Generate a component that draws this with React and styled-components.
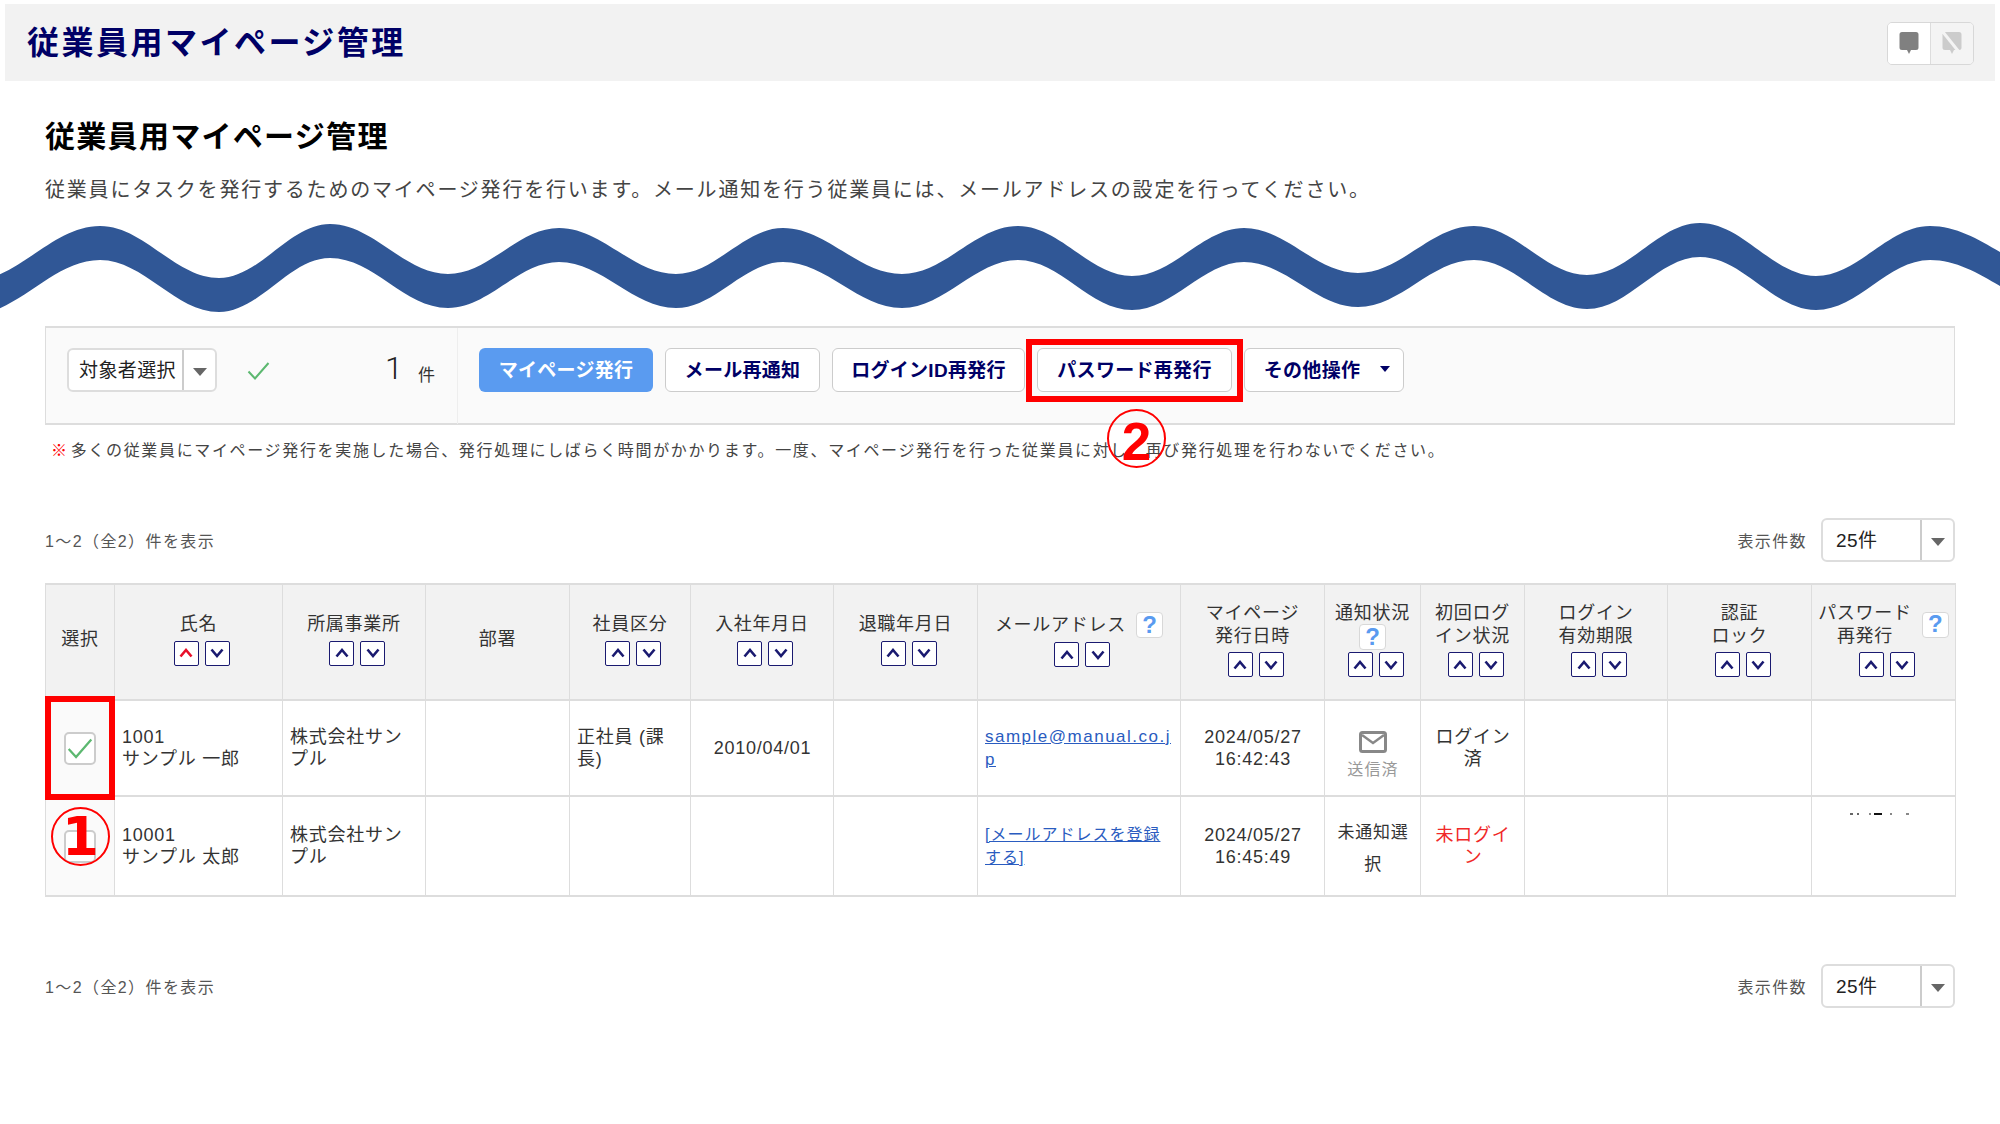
import React from "react";
import styled, { createGlobalStyle } from "styled-components";

const GlobalStyle = createGlobalStyle`
    html, body {
        margin: 0;
        padding: 0;
        background: #fff;
    }
    body {
        font-family: "Liberation Sans", "Noto Sans CJK JP", sans-serif;
        color: #333;
        width: 2000px;
        height: 1124px;
        overflow: hidden;
    }
`;

const Header = styled.header`
    display: flex;
    align-items: center;
    justify-content: space-between;
    height: 77px;
    margin: 4px 5px 0;
    padding: 0 21px 0 22px;
    background: #f2f2f2;
`;

const HeaderTitle = styled.h1`
    margin: 0;
    font-size: 32px;
    letter-spacing: 2.5px;
    line-height: 40px;
    font-weight: 700;
    color: #000066;
`;

const HeaderButtons = styled.div`
    display: flex;
    width: 87px;
    height: 43px;
    border: 1px solid #d8d8d8;
    border-radius: 5px;
    overflow: hidden;
    box-sizing: border-box;
    margin-top: 1px;
`;

const HeaderButton = styled.div`
    flex: 1;
    display: flex;
    align-items: center;
    justify-content: center;
    background: ${(p) => (p.$off ? "#f4f4f4" : "#fff")};
    & + & {
        border-left: 1px solid #ddd;
    }
`;

const Main = styled.main`
    padding: 0 45px;
`;

const Heading = styled.h2`
    margin: 36px 0 0;
    font-size: 30px;
    letter-spacing: 1.3px;
    line-height: 40px;
    font-weight: 700;
    color: #000;
`;

const Description = styled.p`
    margin: 18px 0 0;
    font-size: 20px;
    letter-spacing: 1.8px;
    line-height: 30px;
    color: #444;
`;

const WaveHolder = styled.div`
    margin: 15px -45px 0;
    height: 96px;
    & svg {
        display: block;
    }
`;

const Toolbar = styled.div`
    display: flex;
    height: 99px;
    margin-top: 10px;
    box-sizing: border-box;
    border: 2px solid #ddd;
    border-width: 2px 1px 2px 1px;
    background: #fafafa;
`;

const ToolbarLeft = styled.div`
    display: flex;
    width: 412px;
    height: 96px;
    box-sizing: border-box;
    padding: 20px 0 0 21px;
    border-right: 1px solid #eee;
`;

const SelectBox = styled.div`
    display: flex;
    width: ${(p) => p.$w}px;
    height: 44px;
    box-sizing: border-box;
    background: #fff;
    border: 2px solid #ddd;
    border-radius: 6px;
`;

const SelectLabel = styled.div`
    flex: 1;
    display: flex;
    align-items: center;
    padding-left: ${(p) => p.$pad}px;
    padding-bottom: 3px;
    font-size: 19px;
    letter-spacing: 0.4px;
    color: #222;
`;

const SelectArrow = styled.div`
    width: ${(p) => p.$w}px;
    display: flex;
    align-items: center;
    justify-content: center;
    border-left: 2px solid #ccc;
    &::after {
        content: "";
        border-left: 7px solid transparent;
        border-right: 7px solid transparent;
        border-top: 8px solid #666;
        margin-top: 4px;
    }
`;

const CheckMark = styled.div`
    margin: 14px 0 0 30px;
    height: 18px;
`;

const CountNum = styled.div`
    margin: 2px 0 0 115px;
    width: 20px;
    font-size: 32px;
    line-height: 36px;
    font-family: "Roboto", "Liberation Sans", sans-serif;
    font-weight: 300;
    color: #222;
`;

const CountUnit = styled.div`
    margin: 16px 0 0 13px;
    font-size: 17px;
    line-height: 24px;
    color: #333;
`;

const ToolbarActions = styled.div`
    display: flex;
    align-items: flex-start;
    padding: 20px 0 0 21px;
    gap: 12px;
`;

const ActionButton = styled.button`
    position: relative;
    width: ${(p) => p.$w}px;
    height: 44px;
    padding: 0 0 3px ${(p) => p.$shift ?? 0}px;
    box-sizing: border-box;
    border: ${(p) => (p.$primary ? "none" : "1.5px solid #ccc")};
    border-radius: 6px;
    background: ${(p) => (p.$primary ? "#5a9bf0" : "#fff")};
    color: ${(p) => (p.$primary ? "#fff" : "#000066")};
    font-family: inherit;
    font-size: 19px;
    letter-spacing: 0.3px;
    font-weight: 700;
    display: flex;
    align-items: center;
    justify-content: center;
`;

const Caret = styled.span`
    margin-left: 20px;
    border-left: 5px solid transparent;
    border-right: 5px solid transparent;
    border-top: 6px solid #000066;
`;

const Highlight = styled.div`
    position: absolute;
    top: ${(p) => p.$t}px;
    right: ${(p) => p.$x}px;
    bottom: ${(p) => p.$b}px;
    left: ${(p) => p.$x}px;
    border: 6px solid #ff0000;
    z-index: 2;
    pointer-events: none;
`;

const StepCircle = styled.div`
    position: absolute;
    top: ${(p) => p.$t}px;
    left: ${(p) => p.$l}px;
    width: 59px;
    height: 59px;
    box-sizing: border-box;
    padding-top: ${(p) => p.$drop ?? 0}px;
    border: 2.5px solid #ff0000;
    border-radius: 50%;
    color: #ff0000;
    display: flex;
    align-items: center;
    justify-content: center;
    font-family: ${(p) => p.$font};
    font-size: ${(p) => p.$size}px;
    letter-spacing: 0;
    font-weight: 700;
    line-height: 1;
    z-index: 3;
`;

const Note = styled.p`
    margin: 13px 0 0 6px;
    font-size: 16px;
    letter-spacing: 1.66px;
    line-height: 26px;
    color: #444;
`;

const Mark = styled.span`
    color: #ff0000;
    font-weight: 700;
    margin-right: 2px;
`;

const Pager = styled.div`
    display: flex;
    align-items: center;
    justify-content: space-between;
    height: 44px;
    margin-top: ${(p) => p.$mt}px;
`;

const PagerText = styled.div`
    font-size: 16px;
    letter-spacing: 1.4px;
    color: #555;
`;

const PagerSize = styled.div`
    display: flex;
    align-items: center;
    gap: 14px;
`;

const Table = styled.table`
    width: 1910px;
    margin-top: 21px;
    table-layout: fixed;
    border-collapse: collapse;
    font-size: 18px;
    letter-spacing: 0.75px;
`;

const Th = styled.th`
    position: relative;
    height: 116px;
    padding: 0 2px 5px;
    box-sizing: border-box;
    background: #f2f2f2;
    border: 1px solid #ddd;
    border-top-width: 2px;
    border-bottom-width: 2px;
    font-weight: 400;
    line-height: 22.5px;
    text-align: center;
    vertical-align: middle;
    color: #333;
`;

const Td = styled.td`
    position: relative;
    height: ${(p) => p.$h}px;
    padding: ${(p) => p.$top ?? 0}px 6px 0 7px;
    box-sizing: border-box;
    border: 1px solid #ddd;
    border-bottom-width: 2px;
    line-height: 22.5px;
    text-align: ${(p) => (p.$center ? "center" : "left")};
    vertical-align: middle;
    color: ${(p) => (p.$red ? "#f02828" : "#333")};
`;

const SelectCell = styled(Td)`
    padding: 0;
    background: #fafafa;
`;

const Check = styled.div`
    display: flex;
    align-items: center;
    justify-content: center;
    width: 32px;
    height: 33px;
    margin: 0 auto;
    box-sizing: border-box;
    background: #fff;
    border: 2px solid #ccc;
    border-radius: 5px;
`;

const SortRow = styled.div`
    display: flex;
    justify-content: center;
    margin-top: ${(p) => p.$mt ?? 5}px;
`;

const SortButton = styled.span`
    display: flex;
    align-items: center;
    justify-content: center;
    width: 25px;
    height: 25px;
    margin-left: 6px;
    box-sizing: border-box;
    background: #fff;
    border: 1.5px solid #1a1a70;
    border-radius: 2px;
`;

const HelpButton = styled.span`
    display: inline-flex;
    align-items: center;
    justify-content: center;
    width: 27px;
    height: 26px;
    box-sizing: border-box;
    background: #fff;
    border: 1px solid #d8d8d8;
    border-radius: 4px;
    color: #5a9bf0;
    font-size: 24px;
    font-weight: 700;
    letter-spacing: 0;
`;

const TitleRow = styled.div`
    display: flex;
    align-items: center;
    justify-content: center;
    gap: 10px;
`;

const MailLink = styled.a`
    color: #2a5cc0;
    text-decoration: underline;
    font-size: ${(p) => p.$size}px;
    letter-spacing: ${(p) => p.$ls}px;
`;

const SentLabel = styled.div`
    margin-top: 1px;
    font-size: 16px;
    letter-spacing: 1.2px;
    color: #999;
`;

const TallLines = styled.div`
    padding-top: 6px;
    line-height: 32px;
    font-size: 17px;
`;

// leftover specks of a cut-off line in the last column of the screenshot
const TextScrap = styled.div`
    position: absolute;
    top: 16px;
    left: 38px;
    width: 59px;
    height: 2px;
    background:
        linear-gradient(#666, #666) 0 0 / 3px 100% no-repeat,
        linear-gradient(#666, #666) 7px 0 / 2px 100% no-repeat,
        linear-gradient(#888, #888) 19px 0 / 2px 100% no-repeat,
        linear-gradient(#111, #111) 24px 0 / 8px 100% no-repeat,
        linear-gradient(#888, #888) 40px 0 / 2px 100% no-repeat,
        linear-gradient(#888, #888) 56px 0 / 3px 100% no-repeat;
`;

const columns = [69, 168, 143, 144, 121, 143, 144, 203, 144, 96, 104, 143, 144, 144];

const wavePoints = [
    [-30, 298], [100, 243], [219, 295], [330, 241], [448, 291], [559, 245], [676, 291],
    [783, 245], [902, 291], [1018, 243], [1132, 293], [1244, 245], [1358, 290], [1474, 243],
    [1587, 292], [1700, 240], [1816, 293], [1930, 243], [2070, 295],
];

// the band has a constant vertical thickness, so both edges use the same curve
const curve = (points, offset) =>
    points.slice(1).map((pt, i) => {
        const prev = points[i];
        const mid = (pt[0] - prev[0]) * 0.37;
        return `C${prev[0] + mid} ${prev[1] + offset} ${pt[0] - mid} ${pt[1] + offset} ${pt[0]} ${pt[1] + offset}`;
    }).join(" ");

const wavePath = () => {
    const back = [...wavePoints].reverse();
    const top = -17 - 220;
    const bottom = 17 - 220;
    return `M${wavePoints[0][0]} ${wavePoints[0][1] + top} ${curve(wavePoints, top)} L${back[0][0]} ${back[0][1] + bottom} ${curve(back, bottom)} Z`;
};

const Wave = () => (
    <WaveHolder>
        <svg width="2000" height="96" viewBox="0 0 2000 96">
            <path d={wavePath()} fill="#305796" />
        </svg>
    </WaveHolder>
);

const Bubble = ({ off }) => (
    <svg width="20" height="22" viewBox="0 0 20 22">
        <path
            d="M3 0H17A2.5 2.5 0 0 1 19.5 2.5V15.5A2.5 2.5 0 0 1 17 18H12L10 22L8 18H3A2.5 2.5 0 0 1 .5 15.5V2.5A2.5 2.5 0 0 1 3 0Z"
            fill={off ? "#cccccc" : "#808080"}
        />
        {off && <path d="M1 0L17 20" stroke="#f4f4f4" strokeWidth="3" />}
    </svg>
);

const Tick = ({ width = 23, height = 18 }) => (
    <svg width={width} height={height} viewBox="0 0 23 18">
        <path d="M1.5 9.5L8 16.5L21.5 1" fill="none" stroke="#5cb870" strokeWidth="2" />
    </svg>
);

const Chevron = ({ down, red }) => (
    <svg width="14" height="10" viewBox="0 0 14 10">
        <path
            d={down ? "M1.5 1.5L7 8L12.5 1.5" : "M1.5 8.5L7 2L12.5 8.5"}
            fill="none"
            stroke={red ? "#e8102a" : "#1a1a70"}
            strokeWidth="2.6"
        />
    </svg>
);

const Sort = ({ active, mt }) => (
    <SortRow $mt={mt}>
        <SortButton><Chevron red={active} /></SortButton>
        <SortButton><Chevron down /></SortButton>
    </SortRow>
);

const MailIcon = () => (
    <svg width="28" height="22" viewBox="0 0 28 22">
        <rect x="1.5" y="1.5" width="25" height="19" rx="2" fill="#fff" stroke="#888" strokeWidth="3" />
        <path d="M3 4L14 12L25 4" fill="none" stroke="#888" strokeWidth="2.4" />
    </svg>
);

const PageSize = () => (
    <PagerSize>
        <PagerText>表示件数</PagerText>
        <SelectBox $w={134}>
            <SelectLabel $pad={13}>25件</SelectLabel>
            <SelectArrow $w={31} />
        </SelectBox>
    </PagerSize>
);

const PagerRow = ({ mt }) => (
    <Pager $mt={mt}>
        <PagerText>1～2（全2）件を表示</PagerText>
        <PageSize />
    </Pager>
);

const App = () => {
    return (
        <>
            <GlobalStyle />
            <Header>
                <HeaderTitle>従業員用マイページ管理</HeaderTitle>
                <HeaderButtons>
                    <HeaderButton><Bubble /></HeaderButton>
                    <HeaderButton $off><Bubble off /></HeaderButton>
                </HeaderButtons>
            </Header>
            <Main>
                <Heading>従業員用マイページ管理</Heading>
                <Description>
                    従業員にタスクを発行するためのマイページ発行を行います。メール通知を行う従業員には、メールアドレスの設定を行ってください。
                </Description>
                <Wave />
                <Toolbar>
                    <ToolbarLeft>
                        <SelectBox $w={150}>
                            <SelectLabel $pad={10}>対象者選択</SelectLabel>
                            <SelectArrow $w={31} />
                        </SelectBox>
                        <CheckMark><Tick /></CheckMark>
                        <CountNum>1</CountNum>
                        <CountUnit>件</CountUnit>
                    </ToolbarLeft>
                    <ToolbarActions>
                        <ActionButton $primary $w={174}>マイページ発行</ActionButton>
                        <ActionButton $w={155}>メール再通知</ActionButton>
                        <ActionButton $w={193}>ログインID再発行</ActionButton>
                        <ActionButton $w={195}>
                            パスワード再発行
                            <Highlight $t={-10} $b={-11} $x={-12} />
                            <StepCircle $t={60} $l={69} $size={53} $drop={5} $font={`"Liberation Sans", sans-serif`}>2</StepCircle>
                        </ActionButton>
                        <ActionButton $w={160} $shift={6}>その他操作<Caret /></ActionButton>
                    </ToolbarActions>
                </Toolbar>
                <Note>
                    <Mark>※</Mark>
                    多くの従業員にマイページ発行を実施した場合、発行処理にしばらく時間がかかります。一度、マイページ発行を行った従業員に対し、再び発行処理を行わないでください。
                </Note>
                <PagerRow mt={54} />
                <Table>
                    <colgroup>
                        {columns.map((w, i) => <col key={i} width={w} />)}
                    </colgroup>
                    <thead>
                        <tr>
                            <Th>選択</Th>
                            <Th>氏名<Sort active /></Th>
                            <Th>所属事業所<Sort /></Th>
                            <Th>部署</Th>
                            <Th>社員区分<Sort /></Th>
                            <Th>入社年月日<Sort /></Th>
                            <Th>退職年月日<Sort /></Th>
                            <Th>
                                <TitleRow>メールアドレス<HelpButton>?</HelpButton></TitleRow>
                                <Sort mt={4} />
                            </Th>
                            <Th>マイページ<br />発行日時<Sort /></Th>
                            <Th>通知状況<br /><HelpButton>?</HelpButton><Sort mt={2} /></Th>
                            <Th>初回ログ<br />イン状況<Sort /></Th>
                            <Th>ログイン<br />有効期限<Sort /></Th>
                            <Th>認証<br />ロック<Sort /></Th>
                            <Th>
                                <TitleRow>
                                    <div>パスワード<br />再発行</div>
                                    <HelpButton>?</HelpButton>
                                </TitleRow>
                                <Sort />
                            </Th>
                        </tr>
                    </thead>
                    <tbody>
                        <tr>
                            <SelectCell $h={96}>
                                <Check><Tick width={26} height={21} /></Check>
                                <Highlight $t={-5} $b={-5} $x={-1} />
                            </SelectCell>
                            <Td $h={96}>1001<br />サンプル 一郎</Td>
                            <Td $h={96}>株式会社サン<br />プル</Td>
                            <Td $h={96} />
                            <Td $h={96}>正社員 (課<br />長)</Td>
                            <Td $h={96} $center>2010/04/01</Td>
                            <Td $h={96} />
                            <Td $h={96}><MailLink $size={17} $ls={1.5}>sample@manual.co.j<br />p</MailLink></Td>
                            <Td $h={96} $center>2024/05/27<br />16:42:43</Td>
                            <Td $h={96} $center $top={16}>
                                <MailIcon />
                                <SentLabel>送信済</SentLabel>
                            </Td>
                            <Td $h={96} $center>ログイン<br />済</Td>
                            <Td $h={96} />
                            <Td $h={96} />
                            <Td $h={96} />
                        </tr>
                        <tr>
                            <SelectCell $h={100}>
                                <Check />
                                <StepCircle $t={10} $l={5} $size={53} $font={`"DejaVu Sans", sans-serif`}>1</StepCircle>
                            </SelectCell>
                            <Td $h={100}>10001<br />サンプル 太郎</Td>
                            <Td $h={100}>株式会社サン<br />プル</Td>
                            <Td $h={100} />
                            <Td $h={100} />
                            <Td $h={100} />
                            <Td $h={100} />
                            <Td $h={100}><MailLink $size={16} $ls={1}>[メールアドレスを登録<br />する]</MailLink></Td>
                            <Td $h={100} $center>2024/05/27<br />16:45:49</Td>
                            <Td $h={100} $center><TallLines>未通知選<br />択</TallLines></Td>
                            <Td $h={100} $center $red>未ログイ<br />ン</Td>
                            <Td $h={100} />
                            <Td $h={100} />
                            <Td $h={100}><TextScrap /></Td>
                        </tr>
                    </tbody>
                </Table>
                <PagerRow mt={67} />
            </Main>
        </>
    );
};

export default App;
